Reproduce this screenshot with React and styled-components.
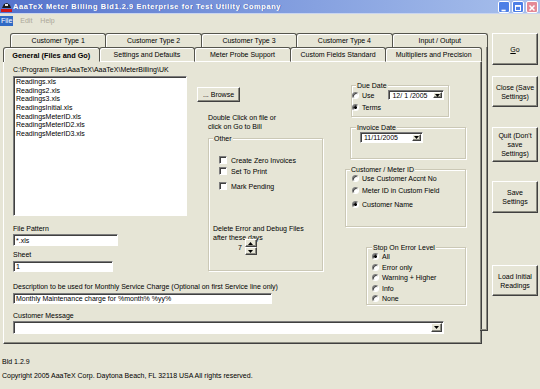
import React from "react";
import styled, { createGlobalStyle } from "styled-components";

const GlobalStyle = createGlobalStyle`
  html, body {
    margin: 0;
    padding: 0;
    width: 540px;
    height: 389px;
    overflow: hidden;
    background: #e6e5d6;
  }
  body {
    font-family: "Liberation Sans", Arial, sans-serif;
    font-size: 7px;
    color: #000;
  }
  * {
    box-sizing: border-box;
  }
`;

const sunken = `
  background: #fff;
  border: 1px solid;
  border-color: #7c7c7c #fff #fff #7c7c7c;
  box-shadow: inset 1px 1px #404040;
`;

const raised = `
  background: #e6e5d6;
  border: 1px solid;
  border-color: #fff #404040 #404040 #fff;
  box-shadow: inset -1px -1px #8a8a80;
`;

function App() {
  return (
    <>
      <GlobalStyle />
      <Window>
        <TitleBar>
          <AppIcon width="11" height="11" viewBox="0 0 11 11">
            <path d="M1 7 L3 3 L6 2 L9 4 L10 7 Z" fill="#1a1a1a" />
            <rect x="4" y="3" width="3" height="2" fill="#e8e8e8" />
            <rect x="0" y="8" width="11" height="3" fill="#d01818" />
          </AppIcon>
          <TitleText>AaaTeX Meter Billing Bld1.2.9 Enterprise for Test Utility Company</TitleText>
          <WinButtons>
            <WinButton>
              <svg width="12" height="12" viewBox="0 0 12 12">
                <rect x="3" y="8" width="5" height="2" fill="#fff" />
              </svg>
            </WinButton>
            <WinButton>
              <svg width="12" height="12" viewBox="0 0 12 12">
                <rect x="3" y="3" width="6" height="6" fill="none" stroke="#fff" strokeWidth="1.2" />
                <rect x="3" y="3" width="6" height="1.6" fill="#fff" />
              </svg>
            </WinButton>
            <WinButton $close>
              <svg width="12" height="12" viewBox="0 0 12 12">
                <path d="M3 3 L9 9 M9 3 L3 9" stroke="#fff" strokeWidth="1.8" />
              </svg>
            </WinButton>
          </WinButtons>
        </TitleBar>

        <MenuBar>
          <MenuItem $active>File</MenuItem>
          <MenuItem>Edit</MenuItem>
          <MenuItem>Help</MenuItem>
        </MenuBar>

        <Main>
          <TabControl>
            <TabRow $indent={7} $w={478} $h={14}>
              <Tab>Customer Type 1</Tab>
              <Tab>Customer Type 2</Tab>
              <Tab>Customer Type 3</Tab>
              <Tab>Customer Type 4</Tab>
              <Tab>Input / Output</Tab>
            </TabRow>
            <TabRow $indent={0} $w={479} $h={15}>
              <Tab $active $front>General (Files and Go)</Tab>
              <Tab $front>Settings and Defaults</Tab>
              <Tab $front>Meter Probe Support</Tab>
              <Tab $front>Custom Fields Standard</Tab>
              <Tab $front>Multipliers and Precision</Tab>
            </TabRow>

            <Panel>
              <LeftColumn>
                <Label>C:\Program Files\AaaTeX\AaaTeX\MeterBilling\UK</Label>
                <ListBox>
                  <ListItem>Readings.xls</ListItem>
                  <ListItem>Readings2.xls</ListItem>
                  <ListItem>Readings3.xls</ListItem>
                  <ListItem>ReadingsInitial.xls</ListItem>
                  <ListItem>ReadingsMeterID.xls</ListItem>
                  <ListItem>ReadingsMeterID2.xls</ListItem>
                  <ListItem>ReadingsMeterID3.xls</ListItem>
                </ListBox>
                <Label $mt={7.5}>File Pattern</Label>
                <TextBox $mt={1.5} $w={105} $h={12}>*.xls</TextBox>
                <Label $mt={3.5}>Sheet</Label>
                <TextBox $mt={2.5} $w={100} $h={11}>1</TextBox>
              </LeftColumn>

              <MiddleColumn>
                <PushButton $mt={22} $w={43} $h={15}>... Browse</PushButton>
                <Note>
                  Double Click on file or
                  <br />
                  click on Go to Bill
                </Note>
                <Group $mt={7.5} $ml={11} $w={115} $h={133}>
                  <Legend $ml={4}>Other</Legend>
                  <OptionList $mt={12} $pl={10}>
                    <OptionRow>
                      <CheckBox />
                      <span>Create Zero Invoices</span>
                    </OptionRow>
                    <OptionRow $mt={1}>
                      <CheckBox />
                      <span>Set To Print</span>
                    </OptionRow>
                    <OptionRow $mt={5}>
                      <CheckBox />
                      <span>Mark Pending</span>
                    </OptionRow>
                  </OptionList>
                  <DeleteNote>
                    Delete Error and Debug Files
                    <br />
                    after these days
                  </DeleteNote>
                  <SpinRow>
                    <span>7</span>
                    <SpinButtons>
                      <SpinButton>
                        <svg width="5" height="3" viewBox="0 0 5 3">
                          <path d="M0 3 L2.5 0 L5 3 Z" fill="#000" />
                        </svg>
                      </SpinButton>
                      <SpinButton>
                        <svg width="5" height="3" viewBox="0 0 5 3">
                          <path d="M0 0 L5 0 L2.5 3 Z" fill="#000" />
                        </svg>
                      </SpinButton>
                    </SpinButtons>
                  </SpinRow>
                </Group>
              </MiddleColumn>

              <RightColumn>
                <Group $mt={20} $ml={9} $w={98} $h={33}>
                  <Legend $ml={4}>Due Date</Legend>
                  <OptionList $pl={0}>
                    <OptionRow>
                      <Radio />
                      <span>Use</span>
                      <DateCombo $ml={11} $w={56} $h={10}>
                        <span>12/ 1 /2005</span>
                        <DropButton />
                      </DateCombo>
                    </OptionRow>
                    <OptionRow $mt={2}>
                      <Radio $checked />
                      <span>Terms</span>
                    </OptionRow>
                  </OptionList>
                </Group>

                <Group $mt={10} $ml={8} $w={116} $h={32}>
                  <Legend $ml={5}>Invoice Date</Legend>
                  <DateCombo $ml={9} $w={63} $h={11}>
                    <span>11/11/2005</span>
                    <DropButton />
                  </DateCombo>
                </Group>

                <Group $mt={10} $ml={3} $w={121} $h={59}>
                  <Legend $ml={4}>Customer / Meter ID</Legend>
                  <OptionList $pl={6}>
                    <OptionRow>
                      <Radio />
                      <span>Use Customer Accnt No</span>
                    </OptionRow>
                    <OptionRow $mt={2}>
                      <Radio />
                      <span>Meter ID in Custom Field</span>
                    </OptionRow>
                    <OptionRow $mt={4}>
                      <Radio $checked />
                      <span>Customer Name</span>
                    </OptionRow>
                  </OptionList>
                </Group>

                <Group $mt={20} $ml={24} $w={100} $h={59}>
                  <Legend $ml={5}>Stop On Error Level</Legend>
                  <OptionList $pl={5}>
                    <OptionRow $h={10.5}>
                      <Radio $checked />
                      <span>All</span>
                    </OptionRow>
                    <OptionRow $h={10.5}>
                      <Radio />
                      <span>Error only</span>
                    </OptionRow>
                    <OptionRow $h={10.5}>
                      <Radio />
                      <span>Warning + Higher</span>
                    </OptionRow>
                    <OptionRow $h={10.5}>
                      <Radio />
                      <span>Info</span>
                    </OptionRow>
                    <OptionRow $h={10.5}>
                      <Radio />
                      <span>None</span>
                    </OptionRow>
                  </OptionList>
                </Group>
              </RightColumn>

              <DescriptionField>
                <Label>Description to be used for Monthly Service Charge (Optional on first Service line only)</Label>
                <TextBox $mt={1.5} $w={259} $h={11}>
                  Monthly Maintenance charge for %month% %yy%
                </TextBox>
              </DescriptionField>

              <MessageField>
                <Label $mt={5.5}>Customer Message</Label>
                <DateCombo $mt={1.5} $w={431} $h={13}>
                  <span />
                  <DropButton $w={11} />
                </DateCombo>
              </MessageField>
            </Panel>
          </TabControl>

          <ActionColumn>
            <PushButton $w={46} $h={32}>
              <span>
                <u>G</u>o
              </span>
            </PushButton>
            <PushButton $mt={11} $w={46} $h={31}>
              Close (Save
              <br />
              Settings)
            </PushButton>
            <PushButton $mt={20} $w={46} $h={35}>
              Quit (Don't
              <br />
              save
              <br />
              Settings)
            </PushButton>
            <PushButton $mt={19} $w={46} $h={32}>
              Save
              <br />
              Settings
            </PushButton>
            <PushButton $mt={52} $w={46} $h={31}>
              Load Initial
              <br />
              Readings
            </PushButton>
          </ActionColumn>
        </Main>

        <Footer>
          <FooterLine>Bld 1.2.9</FooterLine>
          <FooterLine $mt={5}>
            Copyright 2005 AaaTeX Corp. Daytona Beach, FL 32118 USA All rights reserved.
          </FooterLine>
        </Footer>
      </Window>
    </>
  );
}

export default App;

// ─── Styled Components ────────────────────────────────────────────────────────

const Window = styled.div`
  display: flex;
  flex-direction: column;
  width: 540px;
  height: 389px;
`;

const TitleBar = styled.div`
  display: flex;
  align-items: center;
  height: 14px;
  padding: 0 2px 0 1px;
  background: linear-gradient(to right, #5573cc 0%, #7b97dc 45%, #a8c0ec 100%);
  border-bottom: 1px solid #c9d5f0;
`;

const AppIcon = styled.svg`
  flex: none;
`;

const TitleText = styled.div`
  flex: 1;
  margin-left: 1px;
  color: #fff;
  font-size: 7.5px;
  font-weight: bold;
  letter-spacing: 0.55px;
  white-space: nowrap;
  text-shadow: 1px 0 0 rgba(40, 60, 140, 0.45);
`;

const WinButtons = styled.div`
  display: flex;
  gap: 2px;
`;

const WinButton = styled.div`
  width: 12px;
  height: 12px;
  display: flex;
  border-radius: 2px;
  border: 1px solid #fff;
  background: ${({ $close }) => ($close ? "#e48a96" : "#4d7fe6")};
`;

const MenuBar = styled.div`
  display: flex;
  align-items: center;
  gap: 6px;
  height: 14px;
`;

const MenuItem = styled.div`
  height: 10px;
  line-height: 10px;
  padding: 0 1px;
  color: ${({ $active }) => ($active ? "#fff" : "#aca899")};
  background: ${({ $active }) => ($active ? "#316ac5" : "transparent")};
`;

const Main = styled.div`
  display: flex;
  align-items: flex-start;
  margin-top: 5px;
`;

const TabControl = styled.div`
  display: flex;
  flex-direction: column;
  width: 485px;
  margin-left: 3px;
`;

const TabRow = styled.div`
  display: flex;
  width: ${({ $w }) => $w}px;
  height: ${({ $h }) => $h}px;
  margin-left: ${({ $indent }) => $indent}px;
`;

const Tab = styled.div`
  flex: 1;
  display: flex;
  align-items: center;
  justify-content: center;
  white-space: nowrap;
  border: 1px solid #55554d;
  border-bottom: ${({ $front, $active }) =>
    $front && !$active ? "1px solid #fff" : "none"};
  border-radius: 3px 3px 0 0;
  box-shadow: inset 1px 1px #fff;
  margin-left: -1px;
  font-weight: ${({ $active }) => ($active ? "bold" : "normal")};
  font-size: ${({ $active }) => ($active ? "7.3px" : "7px")};

  &:first-child {
    margin-left: 0;
  }
`;

const Panel = styled.div`
  position: relative;
  display: grid;
  grid-template-columns: 184px 145px 1fr;
  grid-template-rows: 217px 23px auto;
  width: 479px;
  height: 282px;
  padding: 3px 0 0 9px;
  border-left: 1px solid #fff;
  border-right: 1px solid #404040;
  border-bottom: 1px solid #404040;
  box-shadow: inset -1px -1px #8a8a80;

  &::before {
    content: "";
    position: absolute;
    top: -15px;
    right: -7px;
    bottom: 12px;
    width: 7px;
    border-right: 1px solid #404040;
    border-bottom: 1px solid #404040;
    box-shadow: inset -1px -1px #8a8a80;
    pointer-events: none;
  }
`;

const LeftColumn = styled.div`
  grid-column: 1;
  grid-row: 1;
  display: flex;
  flex-direction: column;
  align-items: flex-start;
`;

const MiddleColumn = styled.div`
  grid-column: 2;
  grid-row: 1;
  display: flex;
  flex-direction: column;
  align-items: flex-start;
`;

const RightColumn = styled.div`
  grid-column: 3;
  grid-row: 1 / 3;
  display: flex;
  flex-direction: column;
  align-items: flex-start;
`;

const DescriptionField = styled.div`
  grid-column: 1 / 3;
  grid-row: 2;
  display: flex;
  flex-direction: column;
  align-items: flex-start;
`;

const MessageField = styled.div`
  grid-column: 1 / 4;
  grid-row: 3;
  display: flex;
  flex-direction: column;
  align-items: flex-start;
`;

const Label = styled.div`
  line-height: 9px;
  height: 9px;
  white-space: nowrap;
  margin-top: ${({ $mt = 0 }) => $mt}px;
`;

const ListBox = styled.div`
  ${sunken}
  width: 174px;
  height: 140px;
  margin-top: 2px;
  padding: 1px 2px;
`;

const ListItem = styled.div`
  line-height: 8.7px;
  height: 8.7px;
  white-space: nowrap;
`;

const TextBox = styled.div`
  ${sunken}
  width: ${({ $w }) => $w}px;
  height: ${({ $h }) => $h}px;
  margin-top: ${({ $mt = 0 }) => $mt}px;
  padding-left: 2px;
  display: flex;
  align-items: center;
  white-space: nowrap;
`;

const PushButton = styled.div`
  ${raised}
  width: ${({ $w }) => $w}px;
  height: ${({ $h }) => $h}px;
  margin-top: ${({ $mt = 0 }) => $mt}px;
  display: flex;
  align-items: center;
  justify-content: center;
  text-align: center;
  line-height: 9px;
  white-space: nowrap;
`;

const Note = styled.div`
  margin: 10.5px 0 0 11px;
  line-height: 9px;
  white-space: nowrap;
`;

const Group = styled.div`
  width: ${({ $w }) => $w}px;
  height: ${({ $h }) => $h}px;
  margin-top: ${({ $mt = 0 }) => $mt}px;
  margin-left: ${({ $ml = 0 }) => $ml}px;
  border: 1px solid #cbc8b6;
  box-shadow: inset 1px 1px #fff, 1px 1px #fff;
  display: flex;
  flex-direction: column;
  align-items: flex-start;
`;

const Legend = styled.div`
  height: 9px;
  line-height: 9px;
  margin: -5px 0 0 ${({ $ml = 4 }) => $ml}px;
  padding: 0 1px;
  background: #e6e5d6;
  white-space: nowrap;
`;

const OptionList = styled.div`
  display: flex;
  flex-direction: column;
  margin-top: ${({ $mt = 0 }) => $mt}px;
  padding-left: ${({ $pl = 0 }) => $pl}px;
`;

const OptionRow = styled.div`
  display: flex;
  align-items: center;
  gap: 3px;
  height: ${({ $h = 10 }) => $h}px;
  margin-top: ${({ $mt = 0 }) => $mt}px;
  white-space: nowrap;
`;

const CheckBox = styled.span`
  ${sunken}
  display: block;
  width: 8px;
  height: 8px;
  margin-right: 1px;
  flex: none;
`;

const Radio = styled.span`
  display: block;
  flex: none;
  width: 7px;
  height: 7px;
  border-radius: 50%;
  border: 1px solid;
  border-color: #7c7c7c #fff #fff #7c7c7c;
  box-shadow: inset 1px 1px #404040;
  background: ${({ $checked }) =>
    $checked
      ? "radial-gradient(circle, #000 0 1.2px, #fff 1.7px)"
      : "#fff"};
`;

const DateCombo = styled.div`
  ${sunken}
  width: ${({ $w }) => $w}px;
  height: ${({ $h }) => $h}px;
  margin-left: ${({ $ml = 0 }) => $ml}px;
  margin-top: ${({ $mt = 0 }) => $mt}px;
  display: flex;
  align-items: center;
  justify-content: space-between;
  padding: 0 1px 0 3px;
  white-space: nowrap;
  font-size: 7px;
`;

const DropButtonBox = styled.span`
  ${raised}
  width: ${({ $w = 9 }) => $w}px;
  height: calc(100% - 2px);
  display: flex;
  align-items: center;
  justify-content: center;
`;

function DropButton({ $w }) {
  return (
    <DropButtonBox $w={$w}>
      <svg width="5" height="3" viewBox="0 0 5 3">
        <path d="M0 0 L5 0 L2.5 3 Z" fill="#000" />
      </svg>
    </DropButtonBox>
  );
}

const DeleteNote = styled.div`
  margin: 32.5px 0 0 4px;
  line-height: 9px;
  white-space: nowrap;
`;

const SpinRow = styled.div`
  display: flex;
  align-items: center;
  gap: 3px;
  margin: -2.5px 0 0 29px;
`;

const SpinButtons = styled.div`
  display: flex;
  flex-direction: column;
`;

const SpinButton = styled.span`
  ${raised}
  width: 12px;
  height: 8px;
  display: flex;
  align-items: center;
  justify-content: center;
`;

const ActionColumn = styled.div`
  display: flex;
  flex-direction: column;
  margin-left: 4px;
`;

const Footer = styled.div`
  display: flex;
  flex-direction: column;
  padding-left: 2px;
  margin-top: 12.5px;
`;

const FooterLine = styled.div`
  line-height: 9px;
  margin-top: ${({ $mt = 0 }) => $mt}px;
  white-space: nowrap;
`;
